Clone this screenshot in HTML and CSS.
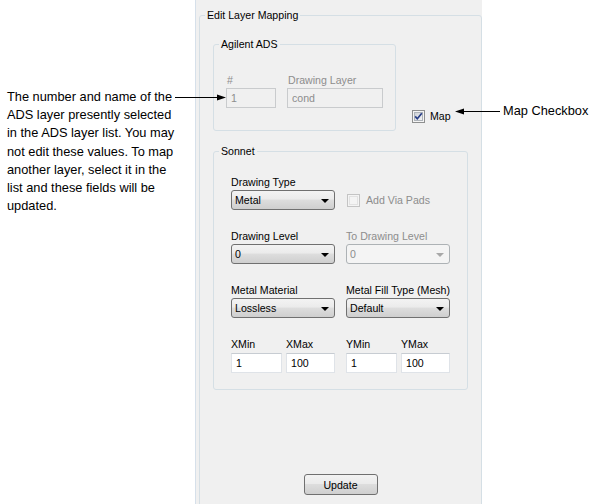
FILE: index.html
```html
<!DOCTYPE html>
<html>
<head>
<meta charset="utf-8">
<link rel="stylesheet" href="styles.css">
</head>
<body>
<div class="page">
  <div class="notes">
    <p class="note">The number and name of the<br>ADS layer presently selected<br>in the ADS layer list. You may<br>not edit these values. To map<br>another layer, select it in the<br>list and these fields will be<br>updated.</p>
  </div>
  <div class="panel">
    <fieldset class="group main">
      <legend>Edit Layer Mapping</legend>
      <div class="top-row">
        <fieldset class="group ads">
          <legend>Agilent ADS</legend>
          <div class="ads-fields">
            <div class="field f-num"><span class="lbl dis">#</span><div class="input dis">1</div></div>
            <div class="field f-layer"><span class="lbl dis">Drawing Layer</span><div class="input dis">cond</div></div>
          </div>
        </fieldset>
        <div class="check map-check">
          <svg class="box" width="13" height="13" viewBox="0 0 13 13">
            <defs><linearGradient id="cg" x1="0" y1="0" x2="1" y2="1"><stop offset="0" stop-color="#cbcfd5"/><stop offset="1" stop-color="#f6f6f6"/></linearGradient></defs>
            <rect x="0.5" y="0.5" width="12" height="12" fill="#f4f4f4" stroke="#8e8f8f"/>
            <rect x="2.5" y="2.5" width="8" height="8" fill="url(#cg)" stroke="#aeb3b9"/>
            <path d="M3.2 6.4 L5.3 8.8 L9.8 3.2" stroke="#283e86" stroke-width="1.7" fill="none"/>
          </svg>
          <span>Map</span>
        </div>
      </div>
      <fieldset class="group sonnet">
        <legend>Sonnet</legend>
        <div class="grid">
          <div class="cell">
            <span class="lbl">Drawing Type</span>
            <div class="combo">Metal</div>
          </div>
          <div class="cell">
            <span class="lbl">&nbsp;</span>
            <div class="check via">
              <svg class="box" width="13" height="13" viewBox="0 0 13 13">
                <rect x="0.5" y="0.5" width="12" height="12" fill="#f4f4f4" stroke="#c4c4c4"/>
                <rect x="2.5" y="2.5" width="8" height="8" fill="#f4f4f4" stroke="#e2e2e2"/>
              </svg>
              <span class="dis">Add Via Pads</span>
            </div>
          </div>
          <div class="cell">
            <span class="lbl">Drawing Level</span>
            <div class="combo">0</div>
          </div>
          <div class="cell">
            <span class="lbl dis">To Drawing Level</span>
            <div class="combo dis">0</div>
          </div>
          <div class="cell">
            <span class="lbl">Metal Material</span>
            <div class="combo">Lossless</div>
          </div>
          <div class="cell">
            <span class="lbl">Metal Fill Type (Mesh)</span>
            <div class="combo">Default</div>
          </div>
          <div class="cell pair">
            <div class="field"><span class="lbl">XMin</span><div class="input">1</div></div>
            <div class="field"><span class="lbl">XMax</span><div class="input">100</div></div>
          </div>
          <div class="cell pair">
            <div class="field"><span class="lbl">YMin</span><div class="input">1</div></div>
            <div class="field"><span class="lbl">YMax</span><div class="input">100</div></div>
          </div>
        </div>
      </fieldset>
      <div class="actions"><button class="btn">Update</button></div>
    </fieldset>
  </div>
  <div class="callout">Map Checkbox</div>
</div>
<svg class="arrows" width="597" height="504" viewBox="0 0 597 504">
  <line x1="175" y1="97.5" x2="219" y2="97.5" stroke="#000" stroke-width="1"/>
  <polygon points="226,97.5 217,94.5 217,100.5" fill="#000"/>
  <line x1="462" y1="111.5" x2="500" y2="111.5" stroke="#000" stroke-width="1"/>
  <polygon points="455,111.5 464,108.5 464,114.5" fill="#000"/>
</svg>
</body>
</html>
```
FILE: styles.css
```css
html, body {
  margin: 0;
  padding: 0;
  background: #fff;
}
body {
  position: relative;
  width: 597px;
  height: 504px;
  overflow: hidden;
  font-family: "Liberation Sans", Arial, sans-serif;
}
.page {
  display: flex;
  height: 504px;
}
.notes {
  width: 195px;
  flex: none;
}
.note {
  margin: 0;
  padding: 88px 0 0 7px;
  font-size: 12.8px;
  line-height: 18.2px;
  color: #000;
}
.panel {
  width: 287px;
  flex: none;
  background: #f0f0f0;
  border-left: 1px solid #d6e0ea;
  padding: 8px 0 0 3px;
  box-sizing: border-box;
  height: 504px;
  overflow: hidden;
  font-size: 10.6px;
  color: #000;
}
.callout {
  padding: 102px 0 0 21px;
  font-size: 12.8px;
  line-height: 18px;
}
.group {
  margin: 0;
  border: 1px solid #d5dfe5;
  border-radius: 3px;
  min-width: 0;
}
.group > legend {
  padding: 0 2px;
  line-height: 14px;
  font-size: 10.6px;
}
.main {
  width: 283px;
  box-sizing: border-box;
  padding: 15px 13px 0 13px;
  height: 540px;
}
.main > legend { margin-left: -8px; }
.top-row {
  display: flex;
}
.ads {
  width: 183px;
  box-sizing: border-box;
  padding: 22px 12px 22px 13px;
}
.ads > legend { margin-left: -8px; }
.ads-fields {
  display: flex;
  gap: 11px;
  margin-left: -1px;
}
.field {
  display: flex;
  flex-direction: column;
}
.f-num { width: 50px; }
.f-layer { width: 96px; }
.f-num .lbl, .f-layer .lbl { padding-left: 1px; }
.lbl {
  display: block;
  line-height: 14px;
  height: 14px;
  margin-bottom: 1px;
  white-space: nowrap;
}
.dis { color: #8d8d8d; }
.input {
  height: 20px;
  box-sizing: border-box;
  border: 1px solid #dfe3e8;
  border-top-color: #c7ccd2;
  background: #fff;
  line-height: 18px;
  padding-left: 4px;
}
.input.dis {
  background: #f0f0f0;
  border: 1px solid #c9cbcd;
  color: #8d8d8d;
}
.check {
  display: flex;
  align-items: center;
  gap: 5px;
  height: 20px;
}
.check .box { flex: none; display: block; }
.map-check {
  align-self: flex-end;
  margin: 0 0 5px 16px;
}
.sonnet {
  width: 255px;
  box-sizing: border-box;
  margin-top: 13px;
  padding: 17px 17px 16px 17px;
}
.sonnet > legend { margin-left: -12px; }
.grid {
  display: grid;
  grid-template-columns: 104px 104px;
  column-gap: 11px;
  row-gap: 19px;
}
.cell {
  display: flex;
  flex-direction: column;
}
.cell.pair {
  display: grid;
  grid-template-columns: 51px 49px;
  column-gap: 4px;
}
.pair .lbl { margin-bottom: 2px; }
.via { padding-left: 1px; gap: 6px; }
.combo {
  position: relative;
  height: 20px;
  box-sizing: border-box;
  border: 1px solid #707070;
  border-radius: 3px;
  background: linear-gradient(#f3f3f3, #ebebeb 45%, #dddddd 50%, #cfcfcf);
  line-height: 18px;
  padding-left: 3px;
}
.combo::after {
  content: "";
  position: absolute;
  right: 5px;
  top: 8px;
  border-left: 4px solid transparent;
  border-right: 4px solid transparent;
  border-top: 4px solid #000;
}
.combo.dis {
  border-color: #adb2b5;
  background: #f4f4f4;
  color: #8d8d8d;
}
.combo.dis::after { border-top-color: #a8a8a8; }
.actions {
  display: flex;
  justify-content: center;
  margin-top: 84px;
}
.btn {
  width: 74px;
  height: 21px;
  border: 1px solid #707070;
  border-radius: 3px;
  background: linear-gradient(#f3f3f3, #ebebeb 45%, #dddddd 50%, #cfcfcf);
  font-family: "Liberation Sans", Arial, sans-serif;
  font-size: 10.6px;
  color: #000;
  padding: 0;
}
.arrows {
  position: absolute;
  left: 0;
  top: 0;
  pointer-events: none;
}
```
